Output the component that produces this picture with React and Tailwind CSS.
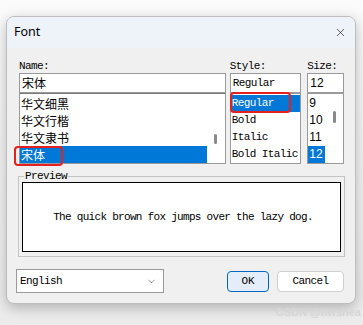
import { ChevronDown, X } from 'lucide-react';

const mono = { fontFamily: '"Liberation Mono", "DejaVu Sans Mono", monospace' };
const cjk = { fontFamily: '"Noto Sans CJK SC", sans-serif' };

function Thumb({ className }) {
  return <div className={`w-[3px] rounded-full bg-[#8a8a8a] ${className}`} />;
}

export default function App() {
  const names = ['华文细黑', '华文行楷', '华文隶书', '宋体'];
  const styles = ['Regular', 'Bold', 'Italic', 'Bold Italic'];
  const sizes = ['9', '10', '11', '12'];

  return (
    <div className="w-[363px] h-[325px] bg-gradient-to-b from-[#fbfbfb] to-[#ececec] pt-[16px] pl-[6px] relative overflow-hidden">
      <div className="w-[350px] h-[288px] rounded-[8px] border border-[#bdbdbd] bg-[#f0f0f0] overflow-hidden shadow-[0_4px_14px_rgba(0,0,0,0.25)] relative">
        {/* Title bar */}
        <div className="h-[31px] bg-[#eef2f9] flex items-center justify-between pl-[7px] pr-[8px]">
          <span className="text-[12.5px] text-black" style={{ fontFamily: '"Noto Sans", "Open Sans", sans-serif' }}>Font</span>
          <X size={13} strokeWidth={1.3} className="text-[#222]" />
        </div>

        {/* Body */}
        <div className="pl-[12px] pr-[11px] pt-[12px]">
          <div className="flex text-[11px] leading-[13px] text-black" style={mono}>
            {/* Name */}
            <div className="w-[208px] flex flex-col">
              <span className="h-[13px] tracking-[-0.6px]">Name:</span>
              <div className="h-[20px] border border-[#9a9a9a] bg-white flex items-center pl-[2px] text-[12px] leading-[16px]" style={cjk}>宋体</div>
              <div className="h-[71px] border border-[#9a9a9a] border-t-[#7a7a7a] bg-white flex">
                <div className="flex-1 flex flex-col pt-[1px]">
                  {names.map((n, i) => (
                    <div
                      key={n}
                      className={`h-[17px] flex items-center pl-[1px] text-[12px] leading-[15px] ${i === 3 ? 'bg-[#0078d7] text-white' : 'text-black'}`}
                      style={cjk}
                    >
                      {n}
                    </div>
                  ))}
                </div>
                <div className="w-[18px] flex justify-center pt-[40px]">
                  <Thumb className="h-[10px]" />
                </div>
              </div>
            </div>

            {/* Style */}
            <div className="w-[72px] ml-[4px] flex flex-col">
              <span className="h-[13px] tracking-[-0.6px]">Style:</span>
              <div className="h-[20px] border border-[#9a9a9a] bg-white flex items-center pl-[2px] tracking-[-0.6px]">Regular</div>
              <div className="h-[71px] border border-[#9a9a9a] bg-white flex flex-col pt-[1px]">
                {styles.map((s, i) => (
                  <div
                    key={s}
                    className={`h-[17px] flex items-center pl-[1px] tracking-[-0.6px] ${i === 0 ? 'bg-[#0078d7] text-white' : ''}`}
                  >
                    {s}
                  </div>
                ))}
              </div>
            </div>

            {/* Size */}
            <div className="w-[37px] ml-[6px] flex flex-col">
              <span className="h-[13px] tracking-[-0.6px]">Size:</span>
              <div className="h-[20px] border border-[#9a9a9a] bg-white flex items-center pl-[2px] text-[12px]" style={{ fontFamily: '"Liberation Sans", sans-serif' }}>12</div>
              <div className="h-[71px] border border-[#9a9a9a] bg-white flex">
                <div className="w-[17px] flex flex-col pt-[1px] text-[12px]" style={{ fontFamily: '"Liberation Sans", sans-serif' }}>
                  {sizes.map((s, i) => (
                    <div key={s} className={`h-[17px] flex items-center pl-[1px] ${i === 3 ? 'bg-[#0078d7] text-white' : ''}`}>
                      {s}
                    </div>
                  ))}
                </div>
                <div className="flex-1 flex justify-center pt-[17px]">
                  <Thumb className="h-[12px]" />
                </div>
              </div>
            </div>
          </div>

          {/* Preview group */}
          <fieldset className="mt-[6px] ml-[-1px] w-[327px] h-[87px] border border-[#c4c4c4] px-[3px] pb-[2px]">
            <legend className="text-[11px] leading-[12px] tracking-[-0.6px] px-[1px] ml-[2px]" style={mono}>Preview</legend>
            <div className="h-[70px] border-[1.5px] border-black bg-white flex items-center justify-center">
              <span className="text-[11px] tracking-[-0.7px] text-black pl-[3px]" style={mono}>
                The quick brown fox jumps over the lazy dog.
              </span>
            </div>
          </fieldset>

          {/* Bottom row */}
          <div className="flex items-center mt-[12px] ml-[-3px]">
            <div className="w-[148px] h-[24px] border border-[#9a9a9a] bg-white flex items-center justify-between pl-[3px] pr-[6px]">
              <span className="text-[11px] tracking-[-0.6px]" style={mono}>English</span>
              <ChevronDown size={11} strokeWidth={1.3} className="text-[#555]" />
            </div>
            <button className="ml-[63px] w-[42px] h-[21px] rounded-[4px] border border-[#0067c0] bg-[#e3eefa] text-[11px]" style={mono}>
              OK
            </button>
            <button className="ml-[8px] w-[67px] h-[21px] rounded-[4px] border border-[#d0d0d0] bg-white text-[11px] tracking-[-0.6px]" style={mono}>
              Cancel
            </button>
          </div>
        </div>

        {/* annotation highlights */}
        <div className="absolute left-[7px] top-[129px] w-[49px] h-[20px] border-2 border-[#e52020] rounded-[4px]" />
        <div className="absolute left-[223px] top-[75px] w-[61px] h-[21px] border-2 border-[#e52020] rounded-[4px]" />
      </div>

      <span className="absolute right-[2px] bottom-[5px] text-[11px] text-[#d6d6d6] font-bold" style={{ fontFamily: '"Liberation Sans", sans-serif' }}>
        CSDN @hwshea
      </span>
    </div>
  );
}
